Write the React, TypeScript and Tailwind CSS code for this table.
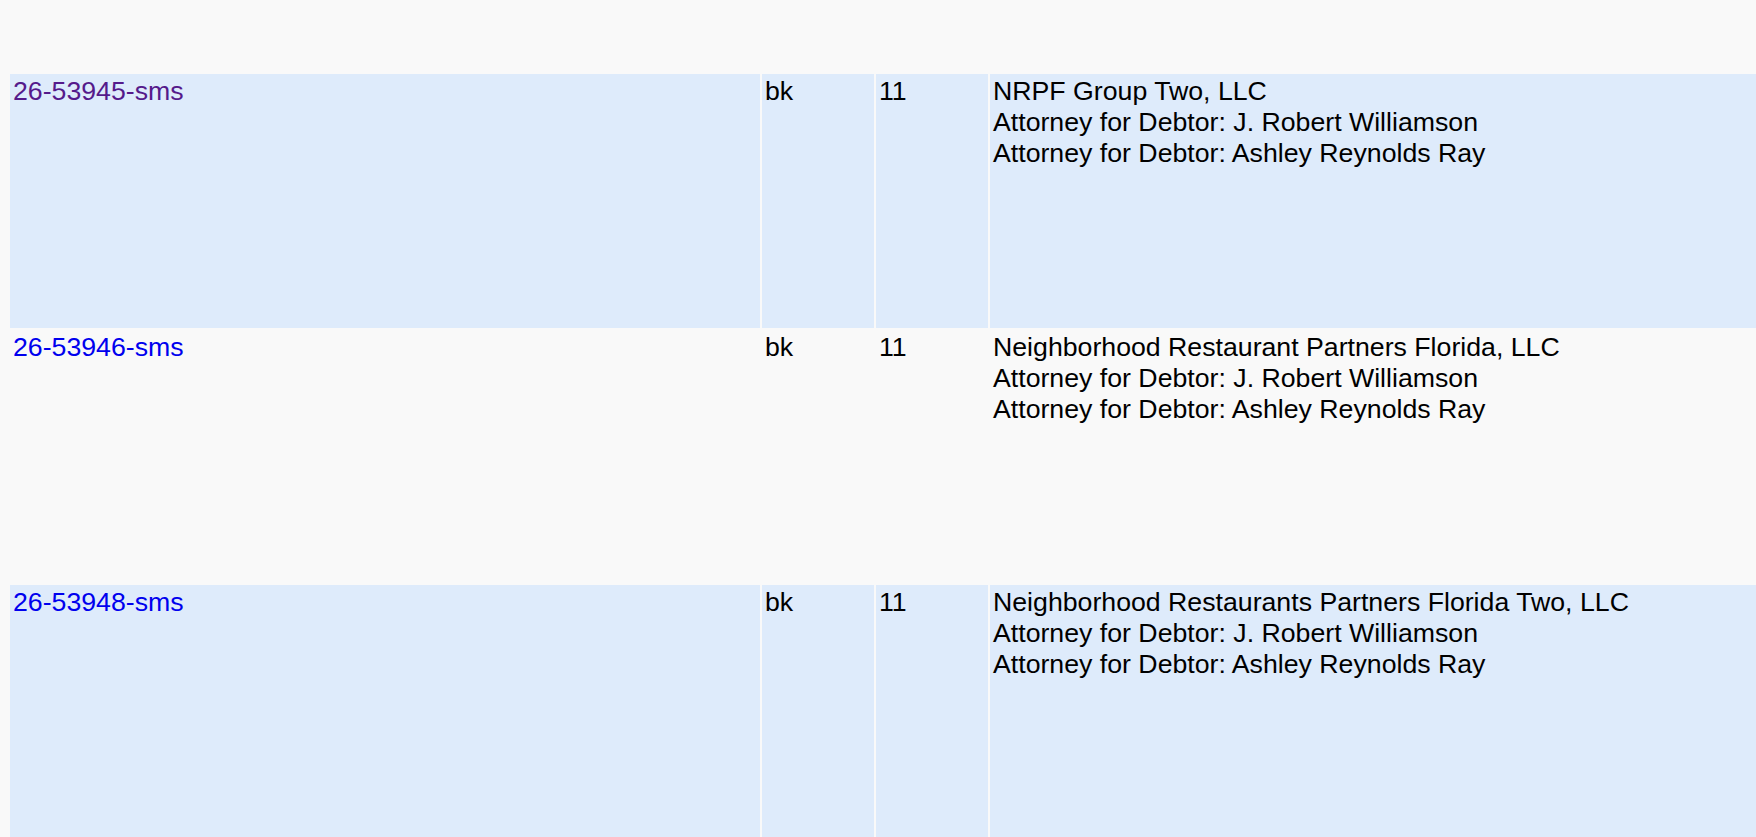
import React from "react";

type Row = { id: string; visited: boolean; h: string; bg: string; lines: string[] };

const rows: Row[] = [
  {
    id: "26-53945-sms",
    visited: true,
    h: "h-[254px]",
    bg: "bg-[#deebfb]",
    lines: [
      "NRPF Group Two, LLC",
      "Attorney for Debtor: J. Robert Williamson",
      "Attorney for Debtor: Ashley Reynolds Ray",
    ],
  },
  {
    id: "26-53946-sms",
    visited: false,
    h: "h-[253px]",
    bg: "bg-transparent",
    lines: [
      "Neighborhood Restaurant Partners Florida, LLC",
      "Attorney for Debtor: J. Robert Williamson",
      "Attorney for Debtor: Ashley Reynolds Ray",
    ],
  },
  {
    id: "26-53948-sms",
    visited: false,
    h: "h-[254px]",
    bg: "bg-[#deebfb]",
    lines: [
      "Neighborhood Restaurants Partners Florida Two, LLC",
      "Attorney for Debtor: J. Robert Williamson",
      "Attorney for Debtor: Ashley Reynolds Ray",
    ],
  },
];

export default function App() {
  return (
    <div
      className="w-[1756px] h-[837px] overflow-hidden bg-[#f9f9f9] pt-[72px] pl-[8px] text-black text-[26.7px] leading-[normal]"
      style={{ fontFamily: '"Liberation Sans", Arial, sans-serif' }}
    >
      <table className="table-fixed border-separate border-spacing-[2px] w-[1900px]">
        <colgroup>
          <col className="w-[750px]" />
          <col className="w-[112px]" />
          <col className="w-[112px]" />
          <col />
        </colgroup>
        <tbody>
          {rows.map((r) => (
            <tr key={r.id} className={r.h}>
              <td className={`${r.bg} align-top px-[3px] pt-[2px] pb-[3px]`}>
                <a
                  href="#"
                  className={r.visited ? "text-[#551a8b] no-underline" : "text-[#0000ee] no-underline"}
                >
                  {r.id}
                </a>
              </td>
              <td className={`${r.bg} align-top px-[3px] pt-[2px] pb-[3px]`}>bk</td>
              <td className={`${r.bg} align-top px-[3px] pt-[2px] pb-[3px]`}>11</td>
              <td className={`${r.bg} align-top px-[3px] pt-[2px] pb-[3px]`}>
                {r.lines.map((l, i) => (
                  <div key={i}>{l}</div>
                ))}
              </td>
            </tr>
          ))}
        </tbody>
      </table>
    </div>
  );
}
